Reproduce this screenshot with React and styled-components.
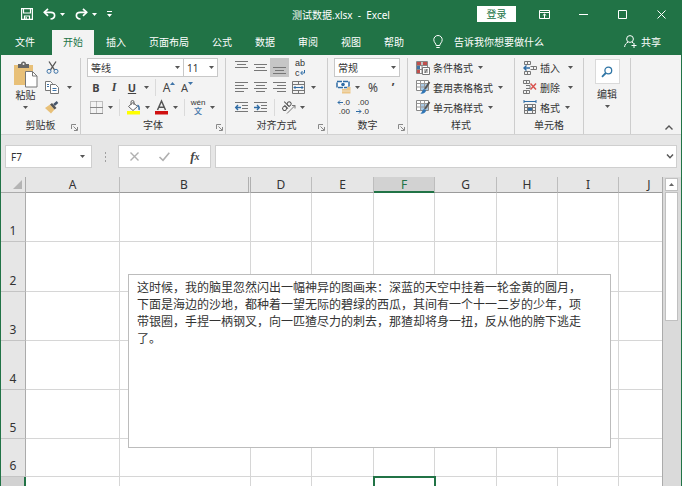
import React, { useState } from "react";
import styled, { createGlobalStyle, css } from "styled-components";

const GREEN = "#217346";
const UI_FONT = `"Noto Sans", "Noto Sans CJK SC", sans-serif`;
const SMALL_FONT = `"Liberation Sans", "Noto Sans CJK SC", sans-serif`;

const GlobalStyle = createGlobalStyle`
    * {
        box-sizing: border-box;
    }
    body {
        margin: 0;
        overflow: hidden;
        font-family: ${UI_FONT};
        font-size: 10px;
        color: #333;
    }
    button, input, select, textarea {
        margin: 0;
        padding: 0;
        border: 0;
        background: none;
        font: inherit;
        color: inherit;
        outline: none;
    }
    svg {
        display: block;
        flex: none;
        overflow: visible;
    }
`

const Window = styled.div`
    display: flex;
    flex-direction: column;
    height: 100vh;
    border: solid ${GREEN};
    border-width: 0 1px;
    background: #e6e6e6;
`

/* ---- title bar ---- */

const TitleBar = styled.header`
    display: grid;
    grid-template-columns: 1fr auto 1fr;
    align-items: center;
    height: 30px;
    padding-bottom: 2px;
    background: ${GREEN};
    color: #fff;
`

const QuickAccess = styled.div`
    display: flex;
    align-items: center;
    gap: 4px;
    padding-left: 17px;
`

const QuickButton = styled.button`
    display: flex;
    align-items: center;
    justify-content: center;
    gap: 4px;
    height: 20px;
    padding: 0 3px;
`

const Title = styled.h1`
    margin: 0;
    font-size: 10px;
    font-weight: 400;
    white-space: pre;
`

const WindowControls = styled.div`
    display: flex;
    justify-content: flex-end;
    align-items: center;
`

const LoginButton = styled.button`
    width: 39px;
    height: 16px;
    margin-right: 9px;
    background: #fff;
    color: ${GREEN};
    line-height: 16px;
`

const WindowButton = styled.button`
    display: flex;
    align-items: center;
    justify-content: center;
    width: 39px;
    height: 28px;
`

/* ---- tabs ---- */

const TabBar = styled.nav`
    display: flex;
    align-items: stretch;
    height: 25px;
    padding: 0 20px 0 3px;
    background: ${GREEN};
    color: #fff;
`

const TabList = styled.div`
    display: flex;
    gap: 1px;
`

const Tab = styled.button`
    padding: 0 11px 2px;
    white-space: nowrap;
    ${({ $file }) => $file && css`
        margin-right: 6px;
    `}
    ${({ $active }) => $active && css`
        background: #f3f3f3;
        color: ${GREEN};
    `}
`

const TellMe = styled.button`
    display: flex;
    align-items: center;
    gap: 11px;
    margin-left: 18px;
    padding-bottom: 2px;
`

const Share = styled.button`
    display: flex;
    align-items: center;
    gap: 4px;
    margin-left: auto;
    padding-bottom: 2px;
`

/* ---- ribbon ---- */

const Ribbon = styled.section`
    display: flex;
    padding-top: 3px;
    background: #f3f3f3;
    border-bottom: 1px solid #d2d2d2;
`

const GroupBox = styled.div`
    display: flex;
    flex-direction: column;
    flex: none;
    width: ${({ $width }) => $width}px;
    border-right: 1px solid #cdcdcd;
`

const GroupBody = styled.div`
    display: flex;
    height: 59px;
    padding-left: ${({ $pad }) => $pad}px;
`

const GroupFooter = styled.div`
    display: grid;
    grid-template-columns: 12px 1fr 12px;
    align-items: center;
    height: 17px;
    text-align: center;
    line-height: 17px;
`

const Launcher = styled.button`
    display: flex;
    justify-content: center;
    padding-top: 4px;
`

const Rows = styled.div`
    display: grid;
    grid-template-rows: 19px 20px 20px;
    align-items: center;
`

const Row = styled.div`
    display: flex;
    align-items: center;
    height: 19px;
`

const Tool = styled.button`
    display: flex;
    align-items: center;
    justify-content: center;
    width: ${({ $w }) => $w || 18}px;
    height: 19px;
    background: ${({ $on }) => ($on ? "#c6c6c6" : "none")};
    font-size: 12px;
    line-height: 19px;
`

const CaretTool = styled(Tool)`
    width: 10px;
`

const Letter = styled.span`
    color: #444;
    font-size: ${({ $size }) => $size || 11}px;
    font-family: ${({ $serif }) => ($serif ? `"Liberation Serif", serif` : UI_FONT)};
    font-weight: ${({ $bold }) => ($bold ? 700 : 400)};
    font-style: ${({ $italic }) => ($italic ? "italic" : "normal")};
    text-decoration: ${({ $under }) => ($under ? "underline" : "none")};
`

const Divider = styled.span`
    width: 1px;
    height: 17px;
    margin: 0 4px;
    background: #dadada;
`

const Combo = styled.label`
    display: grid;
    align-items: center;
    width: ${({ $w }) => $w}px;
    height: 19px;
    margin-left: ${({ $joined }) => ($joined ? "-1px" : 0)};
    border: 1px solid #c8c8c8;
    background: #fff;

    select, svg {
        grid-area: 1 / 1;
    }
    select {
        width: 100%;
        height: 17px;
        padding-left: 3px;
        appearance: none;
    }
    svg {
        justify-self: end;
        margin-right: 3px;
        pointer-events: none;
    }
`

const BigButton = styled.button`
    display: flex;
    flex-direction: column;
    align-items: center;
    width: ${({ $w }) => $w}px;
    padding-top: ${({ $top }) => $top || 0}px;
    line-height: 14px;

    svg:last-child {
        margin-top: 4px;
    }
`

const SearchTile = styled.span`
    display: flex;
    align-items: center;
    justify-content: center;
    width: 25px;
    height: 25px;
    margin-bottom: 3px;
    border: 1px solid #dadada;
    background: #fff;

    && svg {
        margin: 0;
    }
`

const MenuTool = styled.button`
    display: flex;
    align-items: center;
    gap: 3px;
    height: 19px;
    white-space: nowrap;

    svg:last-child {
        margin-left: ${({ $gap }) => $gap || 0}px;
    }
`

const Collapse = styled.button`
    display: flex;
    align-items: flex-end;
    margin-left: auto;
    padding: 0 8px 4px;
`

/* ---- formula bar ---- */

const FormulaBar = styled.section`
    display: flex;
    padding: 10px 4px 9px;
`

const Field = styled.div`
    display: flex;
    align-items: center;
    height: 23px;
    border: 1px solid #cfcfcf;
    background: #fff;
`

const NameBox = styled(Field)`
    width: 87px;
    padding: 0 6px 0 5px;

    input {
        flex: 1;
        min-width: 0;
    }
`

const Dots = styled.div`
    display: flex;
    flex-direction: column;
    align-items: center;
    justify-content: center;
    gap: 2px;
    width: 26px;

    i {
        width: 1px;
        height: 2px;
        background: #a0a0a0;
    }
`

const FormulaButtons = styled(Field)`
    width: 93px;
    margin-right: 4px;
    justify-content: space-around;
`

const FormulaInput = styled(Field)`
    flex: 1;
    padding-right: 2px;

    input {
        flex: 1;
        min-width: 0;
        height: 21px;
        padding: 0 4px;
    }
`

/* ---- sheet ---- */

const SheetArea = styled.main`
    display: flex;
    flex: 1;
    min-height: 0;
`

const Sheet = styled.div`
    position: relative;
    flex: 1;
    min-width: 0;
    overflow: hidden;
    border-right: 1px solid #ababab;
`

const Grid = styled.table`
    width: 100%;
    min-width: 679px;
    table-layout: fixed;
    border-collapse: separate;
    border-spacing: 0;
    background: #fff;
    font-size: 12px;
    line-height: 14px;
`

const Corner = styled.th`
    height: 16px;
    padding: 0;
    border: solid #ababab;
    border-width: 0 1px 1px 0;
    background: #e6e6e6;

    svg {
        margin: 0 3px 0 auto;
    }
`

const ColHead = styled.th`
    height: 16px;
    padding: 0;
    border-right: 1px solid #bdbdbd;
    border-bottom: 1px solid #9b9b9b;
    background: #e6e6e6;
    font-weight: 400;
    ${({ $hiddenNext }) => $hiddenNext && css`
        border-right: 3px double #b0b0b0;
    `}
    ${({ $active }) => $active && css`
        background: #d2d2d2;
        border-bottom-color: ${GREEN};
        box-shadow: inset 0 -1px ${GREEN};
        color: ${GREEN};
    `}
`

const RowHead = styled.th`
    height: ${({ $height }) => $height}px;
    padding: 0 0 3px;
    border-right: 1px solid #ababab;
    border-bottom: 1px solid #c4c4c4;
    background: #e6e6e6;
    font-weight: 400;
    vertical-align: bottom;
    ${({ $active }) => $active && css`
        background: #d2d2d2;
        border-right: 2px solid ${GREEN};
    `}
`

const Cell = styled.td`
    padding: 0;
    border-right: 1px solid #d6d6d6;
    border-bottom: 1px solid #d6d6d6;
    ${({ $active }) => $active && css`
        outline: 2px solid ${GREEN};
        outline-offset: -1px;
    `}
`

// floats above the cells, like any drawing object on a sheet
const TextBox = styled.textarea`
    position: absolute;
    left: 127px;
    top: 97px;
    width: 483px;
    height: 174px;
    padding: 3px 24px 3px 8px;
    border: 1px solid #bcbcbc;
    background: #fff;
    font-family: "Noto Sans CJK SC", sans-serif;
    font-size: 12px;
    line-height: 17px;
    resize: none;
    overflow: hidden;
`

const ScrollBar = styled.div`
    display: flex;
    flex-direction: column;
    width: 18px;
    padding: 1px 3px 0 2px;
    background: #dadada;
`

const ScrollUp = styled.button`
    display: flex;
    align-items: center;
    justify-content: center;
    height: 13px;
    border: 1px solid #c0c0c0;
    background: #fff;
`

const Thumb = styled.div`
    height: 42%;
    margin-top: 1px;
    border: 1px solid #c0c0c0;
    background: #fff;
`

/* ---- icons ---- */

const Caret = ({ color = "#555" }) => (
    <svg width="5" height="3" viewBox="0 0 5 3"><path d="M0 0h5L2.500 3z" fill={color} /></svg>
)

const SaveIcon = () => (
    <svg width="12" height="12" viewBox="0 0 12 12" fill="none" stroke="#fff" strokeWidth="1.2">
        <path d="M.6.6h10.800v10.800H.6z" />
        <path d="M2.500.6v4.400h7V.6" />
        <path d="M3.500 11.400V8h5v3.400M5.200 9v2" />
    </svg>
)

const UndoIcon = ({ flip }) => (
    <svg width="13" height="12" viewBox="0 0 13 12" fill="none" stroke="#fff" strokeWidth="1.7">
        <g transform={flip ? "matrix(-1 0 0 1 13 0)" : undefined}>
            <path d="M5 .8L1.300 4.300 5 7.800" />
            <path d="M1.500 4.300h6.300c2.400 0 3.800 1.300 3.800 3.200S10.400 10.800 7.500 11" />
        </g>
    </svg>
)

const CustomizeIcon = () => (
    <svg width="5" height="6" viewBox="0 0 5 6" fill="#fff"><path d="M0 0h5v1H0zM0 3h5L2.500 6z" /></svg>
)

const RibbonDisplayIcon = () => (
    <svg width="11" height="9" viewBox="0 0 11 9" fill="none" stroke="#fff">
        <path d="M.5.5h10v8H.5zM.5 2.500h10M5.500 8V4M3.800 5.500L5.500 4l1.700 1.500" />
    </svg>
)
const MinIcon = () => (
    <svg width="9" height="9" viewBox="0 0 9 9" stroke="#fff"><path d="M0 4.500h9" /></svg>
)
const MaxIcon = () => (
    <svg width="9" height="9" viewBox="0 0 9 9" stroke="#fff" fill="none"><path d="M.5.5h8v8h-8z" /></svg>
)
const CloseIcon = () => (
    <svg width="9" height="9" viewBox="0 0 9 9" stroke="#fff"><path d="M.5.5l8 8M8.500.5l-8 8" /></svg>
)

const BulbIcon = () => (
    <svg width="10" height="14" viewBox="0 0 10 14" fill="none" stroke="#fff">
        <path d="M3.200 10.500C3.200 8.500.8 7.500.8 4.700a4.200 4.200 0 0 1 8.400 0c0 2.800-2.400 3.800-2.400 5.800zM3.300 12.500h3.400" />
    </svg>
)

const PersonIcon = () => (
    <svg width="13" height="13" viewBox="0 0 13 13" fill="none" stroke="#fff">
        <circle cx="6" cy="4" r="3.400" />
        <path d="M.6 12c.2-2.500 1.600-4 3.400-4.800M8 7.200l1.500 1M10 8v5M7.500 10.500h5" />
    </svg>
)

const PasteIcon = () => (
    <svg width="25" height="27" viewBox="0 0 25 27">
        <path d="M1 4h19v20H1z" fill="#e8c078" />
        <path d="M5 3h3a2.500 2.500 0 0 1 5 0h3v4H5z" fill="#666" />
        <circle cx="10.500" cy="3" r="1" fill="#f3f3f3" />
        <path d="M12.500 10.500h7l4.500 4.500v11H12.500z" fill="#fff" stroke="#777" />
        <path d="M19.500 10.500V15H24" fill="none" stroke="#777" />
    </svg>
)

const CutIcon = () => (
    <svg width="13" height="13" viewBox="0 0 13 13" fill="none">
        <path d="M3 .5l5.500 8.300M10 .5L4.500 8.800" stroke="#555" strokeWidth="1.300" />
        <circle cx="3" cy="10.300" r="2" stroke="#3f74a8" />
        <circle cx="10" cy="10.300" r="2" stroke="#3f74a8" />
    </svg>
)

const CopyIcon = () => (
    <svg width="14" height="13" viewBox="0 0 14 13" fill="#fff" stroke="#777">
        <path d="M.5.500h5l2 2v7h-7z" />
        <path d="M5.500 3.500h5l3 3v6h-8z" />
        <path d="M2 3.500h2M2 5.500h2M7.500 7.500h4M7.500 9.500h4" stroke="#3f74a8" />
    </svg>
)

const BrushIcon = () => (
    <svg width="14" height="13" viewBox="0 0 14 13">
        <path d="M0 7l5-3.500 4.500 5L6 12.500z" fill="#e8c078" />
        <path d="M5 3.500l2-1.500 4.500 5-2 1.500z" fill="#555" />
        <path d="M9 4l3.500-3" stroke="#44546a" strokeWidth="2.500" />
    </svg>
)

const SizeMark = styled.svg`
    align-self: flex-start;
    margin-top: 4px;
`

const GrowIcon = ({ down }) => (
    <SizeMark width="5" height="3" viewBox="0 0 5 3" fill="#3f74a8">
        <path d={down ? "M0 0h5L2.500 3z" : "M0 3h5L2.500 0z"} />
    </SizeMark>
)

const BorderIcon = () => (
    <svg width="13" height="13" viewBox="0 0 13 13" fill="none" stroke="#888">
        <path d="M.5.5h12v12H.5zM6.500.5v12M.5 6.500h12" strokeDasharray="1 1" />
        <path d="M0 12.500h13M0 6.500h13" />
    </svg>
)

const FillIcon = () => (
    <svg width="15" height="15" viewBox="0 0 15 15">
        <path d="M2.500 6.500L7 2.500l4.500 4L7 10.500z" fill="#fff" stroke="#666" />
        <path d="M5 5V2a1.500 1.500 0 0 1 3 0v3" fill="none" stroke="#666" />
        <path d="M11.500 5c1.500 1 2 2.500 1.500 5" fill="none" stroke="#3f74a8" strokeWidth="1.500" />
        <path d="M1 11h13v3.500H1z" fill="#ffff00" />
    </svg>
)

const FontColorIcon = () => (
    <svg width="15" height="15" viewBox="0 0 15 15">
        <path d="M3.500 10L7.500 1l4 9M5 7.200h5" fill="none" stroke="#555" strokeWidth="1.500" />
        <path d="M1 11h13v3.500H1z" fill="#d01010" />
    </svg>
)

const Pinyin = styled.span`
    display: flex;
    flex-direction: column;
    align-items: center;
    font-family: ${SMALL_FONT};
    font-size: 8px;
    line-height: 9px;

    b {
        color: #3f74a8;
        font-weight: 500;
    }
`

// horizontal strokes: [x1, x2] per line, 3px apart
const Lines = ({ lines, y = 1, arrow }) => (
    <svg width="13" height="13" viewBox="0 0 13 13" stroke="#777" fill="none">
        {lines.map(([a, b], i) => <path key={i} d={`M${a} ${y + i * 3 - 0.5}H${b}`} />)}
        {arrow === "left" && <path d="M6 6.500H1M3 4L.7 6.500 3 9" stroke="#2f6ca5" strokeWidth="1.400" />}
        {arrow === "right" && <path d="M0 6.500h5M3 4l2.300 2.500L3 9" stroke="#2f6ca5" strokeWidth="1.400" />}
    </svg>
)

const FULL = [0, 13]
const MID = [2, 11]

const WrapText = styled.span`
    display: grid;
    grid-template-columns: auto auto;
    align-items: center;
    font-family: ${SMALL_FONT};
    font-size: 9px;
    line-height: 10px;

    span {
        grid-column: 1 / 3;
    }
`

const WrapArrow = () => (
    <svg width="5" height="5" viewBox="0 0 5 5" fill="none" stroke="#2f6ca5"><path d="M4.500 0v3H1M2.500 1L.7 3l1.800 2" /></svg>
)

const MergeIcon = () => (
    <svg width="13" height="13" viewBox="0 0 13 13" fill="none" stroke="#777">
        <path d="M.5.5h12v12H.5zM.5 3.500h12M.5 9.500h12M6.500.5v3M6.500 9.500v3" />
        <path d="M2 6.500h9M3.500 5L2 6.500 3.500 8M9.500 5L11 6.500 9.500 8" stroke="#2f6ca5" />
    </svg>
)

const OrientIcon = () => (
    <svg width="15" height="14" viewBox="0 0 15 14" fill="none" stroke="#555">
        <g transform="rotate(-45 5 7)">
            <circle cx="3" cy="7" r="2" />
            <path d="M5.300 4.500v5M7.500 2v7.500" />
            <circle cx="9.500" cy="7" r="2" />
        </g>
        <path d="M6 13.500L14 5.500M14 8.500v-3h-3" stroke="#777" />
    </svg>
)

const CurrencyIcon = () => (
    <svg width="15" height="14" viewBox="0 0 15 14">
        <path d="M1 1.500h12v6H1z" fill="#fff" stroke="#2f6ca5" strokeWidth="1.500" strokeDasharray="5 1" />
        <circle cx="7" cy="4.500" r="1.800" fill="#2f6ca5" />
        <path d="M6 9h5V7h3.500v6.500H6z" fill="#ecc688" />
        <path d="M6 11h8.500" stroke="#f3f3f3" strokeWidth=".6" />
    </svg>
)

const Decimals = styled.span`
    display: grid;
    justify-items: end;
    font-family: ${SMALL_FONT};
    font-size: 8px;
    line-height: 9px;

    span {
        display: flex;
        align-items: center;
    }
`

const SmallArrow = ({ right }) => (
    <svg width="6" height="5" viewBox="0 0 6 5" fill="none" stroke="#2f6ca5">
        <path d={right ? "M0 2.500h5M3 .5l2 2-2 2" : "M6 2.500H1M3 .5l-2 2 2 2"} />
    </svg>
)

const CondIcon = () => (
    <svg width="14" height="14" viewBox="0 0 14 14">
        <path d="M.5.5h11v12H.5z" fill="#fff" stroke="#888" />
        <path d="M.5 4.500h11M.5 8.500h11M6 .5v12" stroke="#888" />
        <path d="M1 1h4v3H1zM1 9h3v3H1zM7 1h4v3H7z" fill="#c0504d" />
        <path d="M1 5h3v3H1z" fill="#3f74a8" />
        <path d="M6.500 6.500h7v7h-7z" fill="#fff" stroke="#777" />
        <path d="M8 9h4M8 11h4M11 8l-2 4" stroke="#555" strokeWidth=".8" />
    </svg>
)

const TableBrushIcon = () => (
    <svg width="14" height="14" viewBox="0 0 14 14">
        <path d="M.5.5h12v10H.5z" fill="#fff" stroke="#888" />
        <path d="M4 4h8v6H4z" fill="#a8c8e4" />
        <path d="M.5 3.500h12M.5 7h12M4.500.5v10M8.500.5v10" stroke="#999" fill="none" />
        <path d="M13.500 2L9 9" stroke="#555" strokeWidth="1.800" />
        <path d="M4 13.500c2 0 2-3.500 4-4.500l2 1.500c0 2.500-3 3.500-6 3z" fill="#2f75b5" />
    </svg>
)

const InsertIcon = () => (
    <svg width="14" height="14" viewBox="0 0 14 14" fill="none" stroke="#777">
        <path d="M1.500.5h6v3h-6zM1.500 10.500h6v3h-6zM4.500.5v3M4.500 10.500v3M7.500 5.500h6v3h-6M10.500 5.500v3" />
        <path d="M7 7H1M3.500 4.500L1 7l2.500 2.500" stroke="#2f6ca5" strokeWidth="1.400" />
    </svg>
)

const DeleteIcon = () => (
    <svg width="14" height="14" viewBox="0 0 14 14" fill="none" stroke="#777">
        <path d="M.5.5h6v3h-6zM.5 10.500h6v3h-6zM3.500.5v3M3.500 10.500v3M3 5.500h4v3H3" />
        <path d="M7.500 3.500l5.500 6M13 3.500l-5.500 6" stroke="#d9534f" strokeWidth="1.500" />
    </svg>
)

const FormatIcon = () => (
    <svg width="14" height="14" viewBox="0 0 14 14" fill="none" stroke="#777">
        <path d="M1 1.500h12M1 0v3M13 0v3" stroke="#2f6ca5" />
        <path d="M1.500 4.500h11v9h-11zM1.500 7.500h11M1.500 10.500h11M4.500 4.500v9M9.500 4.500v9" />
        <path d="M5 8h4v2.500H5z" fill="#2f6ca5" stroke="none" />
    </svg>
)

const SearchIcon = () => (
    <svg width="12" height="12" viewBox="0 0 12 12" fill="none" stroke="#2f75a5">
        <circle cx="7.300" cy="4.500" r="3.400" strokeWidth="1.300" />
        <path d="M4.800 7L1 10.800" strokeWidth="1.800" />
    </svg>
)

const LauncherIcon = () => (
    <svg width="7" height="7" viewBox="0 0 7 7" fill="none" stroke="#888">
        <path d="M.5 5V.5H5M2.500 2.500L6 6M6.500 3v3.500H3" />
    </svg>
)

/* ---- data ---- */

const TABS = ["开始", "插入", "页面布局", "公式", "数据", "审阅", "视图", "帮助"]

const COLUMNS = [
    { name: "A", width: 94 },
    { name: "B", width: 131, hiddenNext: true },
    { name: "D", width: 61 },
    { name: "E", width: 62 },
    { name: "F", width: 61 },
    { name: "G", width: 62 },
    { name: "H", width: 61 },
    { name: "I", width: 61 },
    { name: "J" },
]

const ROWS = [49, 50, 49, 49, 49, 38]

const STORY = "这时候，我的脑里忽然闪出一幅神异的图画来：深蓝的天空中挂着一轮金黄的圆月，下面是海边的沙地，都种着一望无际的碧绿的西瓜，其间有一个十一二岁的少年，项带银圈，手捏一柄钢叉，向一匹猹尽力的刺去，那猹却将身一扭，反从他的胯下逃走了。"

/* ---- parts ---- */

function Group({ label, width, pad = 6, launcher, children }) {
    return (
        <GroupBox $width={width}>
            <GroupBody $pad={pad}>{children}</GroupBody>
            <GroupFooter>
                <span />
                <span>{label}</span>
                {launcher && <Launcher aria-label={label}><LauncherIcon /></Launcher>}
            </GroupFooter>
        </GroupBox>
    )
}

const Drop = ({ label }) => <CaretTool aria-label={label}><Caret /></CaretTool>

function Picker({ label, value, w, joined }) {
    return (
        <Combo $w={w} $joined={joined}>
            <select aria-label={label} defaultValue={value}>
                <option>{value}</option>
            </select>
            <Caret />
        </Combo>
    )
}

function HomeRibbon() {
    return (
        <Ribbon>
            <Group label="剪贴板" width={80} pad={10} launcher>
                <BigButton $w={29} $top={3}>
                    <PasteIcon />
                    粘贴
                    <Caret />
                </BigButton>
                <Rows>
                    <Row><Tool $w={24} aria-label="剪切"><CutIcon /></Tool></Row>
                    <Row><Tool $w={24} aria-label="复制"><CopyIcon /></Tool><Drop label="复制选项" /></Row>
                    <Row><Tool $w={24} aria-label="格式刷"><BrushIcon /></Tool></Row>
                </Rows>
            </Group>

            <Group label="字体" width={145} launcher>
                <Rows>
                    <Row>
                        <Picker label="字体" value="等线" w={97} />
                        <Picker label="字号" value="11" w={35} joined />
                    </Row>
                    <Row>
                        <Tool><Letter $bold>B</Letter></Tool>
                        <Tool><Letter $italic $bold $serif $size={12}>I</Letter></Tool>
                        <Tool><Letter $under $bold>U</Letter></Tool>
                        <Drop label="下划线" />
                        <Divider />
                        <Tool aria-label="增大字号"><Letter $size={12}>A</Letter><GrowIcon /></Tool>
                        <Tool aria-label="减小字号"><Letter>A</Letter><GrowIcon down /></Tool>
                    </Row>
                    <Row>
                        <Tool aria-label="边框"><BorderIcon /></Tool>
                        <Drop label="边框选项" />
                        <Divider />
                        <Tool aria-label="填充颜色"><FillIcon /></Tool>
                        <Drop label="填充选项" />
                        <Tool aria-label="字体颜色"><FontColorIcon /></Tool>
                        <Drop label="颜色选项" />
                        <Divider />
                        <Tool><Pinyin>wén<b>文</b></Pinyin></Tool>
                        <Drop label="拼音" />
                    </Row>
                </Rows>
            </Group>

            <Group label="对齐方式" width={102} launcher>
                <Rows>
                    <Row>
                        <Tool $w={19} aria-label="顶端对齐"><Lines lines={[FULL, MID, FULL]} y={1} /></Tool>
                        <Tool $w={19} aria-label="垂直居中"><Lines lines={[FULL, MID, FULL]} y={4} /></Tool>
                        <Tool $w={19} $on aria-label="底端对齐"><Lines lines={[FULL, MID, FULL]} y={7} /></Tool>
                        <Tool $w={22} aria-label="自动换行">
                            <WrapText><span>ab</span>c<WrapArrow /></WrapText>
                        </Tool>
                    </Row>
                    <Row>
                        <Tool $w={19} aria-label="左对齐"><Lines lines={[FULL, [0, 9], FULL, [0, 9]]} y={2} /></Tool>
                        <Tool $w={19} aria-label="居中"><Lines lines={[FULL, MID, FULL, MID]} y={2} /></Tool>
                        <Tool $w={19} aria-label="右对齐"><Lines lines={[FULL, [4, 13], FULL, [4, 13]]} y={2} /></Tool>
                        <Tool $w={19} aria-label="合并后居中"><MergeIcon /></Tool>
                        <Drop label="合并选项" />
                    </Row>
                    <Row>
                        <Tool $w={19} aria-label="减少缩进"><Lines lines={[FULL, [7, 13], [7, 13], FULL]} y={2} arrow="left" /></Tool>
                        <Tool $w={19} aria-label="增加缩进"><Lines lines={[FULL, [7, 13], [7, 13], FULL]} y={2} arrow="right" /></Tool>
                        <Divider />
                        <Tool aria-label="方向"><OrientIcon /></Tool>
                        <Drop label="方向选项" />
                    </Row>
                </Rows>
            </Group>

            <Group label="数字" width={80} launcher>
                <Rows>
                    <Row><Picker label="数字格式" value="常规" w={66} /></Row>
                    <Row>
                        <Tool aria-label="会计数字格式"><CurrencyIcon /></Tool>
                        <Drop label="货币选项" />
                        <Tool $w={22}><Letter $size={12}>%</Letter></Tool>
                        <Tool><Letter $bold $size={12}>’</Letter></Tool>
                    </Row>
                    <Row>
                        <Tool $w={19} aria-label="增加小数位数">
                            <Decimals><span><SmallArrow />.0</span><span>.00</span></Decimals>
                        </Tool>
                        <Tool $w={19} aria-label="减少小数位数">
                            <Decimals><span>.00</span><span><SmallArrow right />.0</span></Decimals>
                        </Tool>
                    </Row>
                </Rows>
            </Group>

            <Group label="样式" width={107} pad={8}>
                <Rows>
                    <MenuTool $gap={2}><CondIcon />条件格式<Caret /></MenuTool>
                    <MenuTool $gap={2}><TableBrushIcon />套用表格格式<Caret /></MenuTool>
                    <MenuTool $gap={2}><TableBrushIcon />单元格样式<Caret /></MenuTool>
                </Rows>
            </Group>

            <Group label="单元格" width={69} pad={8}>
                <Rows>
                    <MenuTool $gap={5}><InsertIcon />插入<Caret /></MenuTool>
                    <MenuTool $gap={5}><DeleteIcon />删除<Caret /></MenuTool>
                    <MenuTool $gap={2}><FormatIcon />格式<Caret /></MenuTool>
                </Rows>
            </Group>

            <Group label="" width={47} pad={0}>
                <BigButton $w={46} $top={1}>
                    <SearchTile><SearchIcon /></SearchTile>
                    编辑
                    <Caret />
                </BigButton>
            </Group>

            <Collapse aria-label="折叠功能区">
                <svg width="8" height="5" viewBox="0 0 8 5" fill="none" stroke="#555" strokeWidth="1.400"><path d="M.5 4.500L4 1l3.500 3.500" /></svg>
            </Collapse>
        </Ribbon>
    )
}

function SheetGrid() {
    return (
        <Grid>
            <colgroup>
                <col width="25" />
                {COLUMNS.map(c => <col key={c.name} width={c.width} />)}
            </colgroup>
            <thead>
                <tr>
                    <Corner aria-label="全选">
                        <svg width="9" height="9" viewBox="0 0 9 9"><path d="M9 0v9H0z" fill="#b4b4b4" /></svg>
                    </Corner>
                    {COLUMNS.map(c => (
                        <ColHead key={c.name} $active={c.name === "F"} $hiddenNext={c.hiddenNext}>{c.name}</ColHead>
                    ))}
                </tr>
            </thead>
            <tbody>
                {ROWS.map((height, i) => (
                    <tr key={i}>
                        <RowHead $height={height}>{i + 1}</RowHead>
                        {COLUMNS.map(c => <Cell key={c.name} />)}
                    </tr>
                ))}
                <tr>
                    <RowHead $height={49} $active />
                    {COLUMNS.map(c => <Cell key={c.name} $active={c.name === "F"} />)}
                </tr>
            </tbody>
        </Grid>
    )
}

export default function App() {

    const [ tab, setTab ] = useState("开始");
    const [ formula, setFormula ] = useState("");

    return (
        <>
            <GlobalStyle />
            <Window>
                <TitleBar>
                    <QuickAccess>
                        <QuickButton aria-label="保存"><SaveIcon /></QuickButton>
                        <QuickButton aria-label="撤消"><UndoIcon /><Caret color="#fff" /></QuickButton>
                        <QuickButton aria-label="恢复"><UndoIcon flip /><Caret color="#fff" /></QuickButton>
                        <QuickButton aria-label="自定义快速访问工具栏"><CustomizeIcon /></QuickButton>
                    </QuickAccess>
                    <Title>测试数据.xlsx  -  Excel</Title>
                    <WindowControls>
                        <LoginButton>登录</LoginButton>
                        <WindowButton aria-label="功能区显示选项"><RibbonDisplayIcon /></WindowButton>
                        <WindowButton aria-label="最小化"><MinIcon /></WindowButton>
                        <WindowButton aria-label="最大化"><MaxIcon /></WindowButton>
                        <WindowButton aria-label="关闭"><CloseIcon /></WindowButton>
                    </WindowControls>
                </TitleBar>

                <TabBar>
                    <Tab $file>文件</Tab>
                    <TabList>
                        {TABS.map(t => (
                            <Tab key={t} $active={t === tab} onClick={() => setTab(t)}>{t}</Tab>
                        ))}
                    </TabList>
                    <TellMe><BulbIcon />告诉我你想要做什么</TellMe>
                    <Share><PersonIcon />共享</Share>
                </TabBar>

                <HomeRibbon />

                <FormulaBar>
                    <NameBox>
                        <input aria-label="名称框" defaultValue="F7" />
                        <Caret />
                    </NameBox>
                    <Dots><i /><i /><i /></Dots>
                    <FormulaButtons>
                        <Tool aria-label="取消">
                            <svg width="9" height="9" viewBox="0 0 9 9" stroke="#b0b0b0" strokeWidth="1.400"><path d="M.5.5l8 8M8.500.5l-8 8" /></svg>
                        </Tool>
                        <Tool aria-label="输入">
                            <svg width="11" height="9" viewBox="0 0 11 9" fill="none" stroke="#b0b0b0" strokeWidth="1.600"><path d="M.5 5L4 8.300 10.300.8" /></svg>
                        </Tool>
                        <Tool aria-label="插入函数">
                            <Letter $serif $italic $bold $size={13}>f</Letter>
                            <Letter $serif $italic $bold $size={10}>x</Letter>
                        </Tool>
                    </FormulaButtons>
                    <FormulaInput>
                        <input aria-label="编辑栏" value={formula} onChange={e => setFormula(e.target.value)} />
                        <button aria-label="展开编辑栏">
                            <svg width="8" height="5" viewBox="0 0 8 5" fill="none" stroke="#555" strokeWidth="1.400"><path d="M1 .5L4 3.800 7 .5" /></svg>
                        </button>
                    </FormulaInput>
                </FormulaBar>

                <SheetArea>
                    <Sheet>
                        <SheetGrid />
                        <TextBox aria-label="文本框" defaultValue={STORY} spellCheck={false} />
                    </Sheet>
                    <ScrollBar>
                        <ScrollUp aria-label="向上滚动">
                            <svg width="5" height="3" viewBox="0 0 5 3"><path d="M0 3h5L2.500 0z" fill="#666" /></svg>
                        </ScrollUp>
                        <Thumb />
                    </ScrollBar>
                </SheetArea>
            </Window>
        </>
    );
}
